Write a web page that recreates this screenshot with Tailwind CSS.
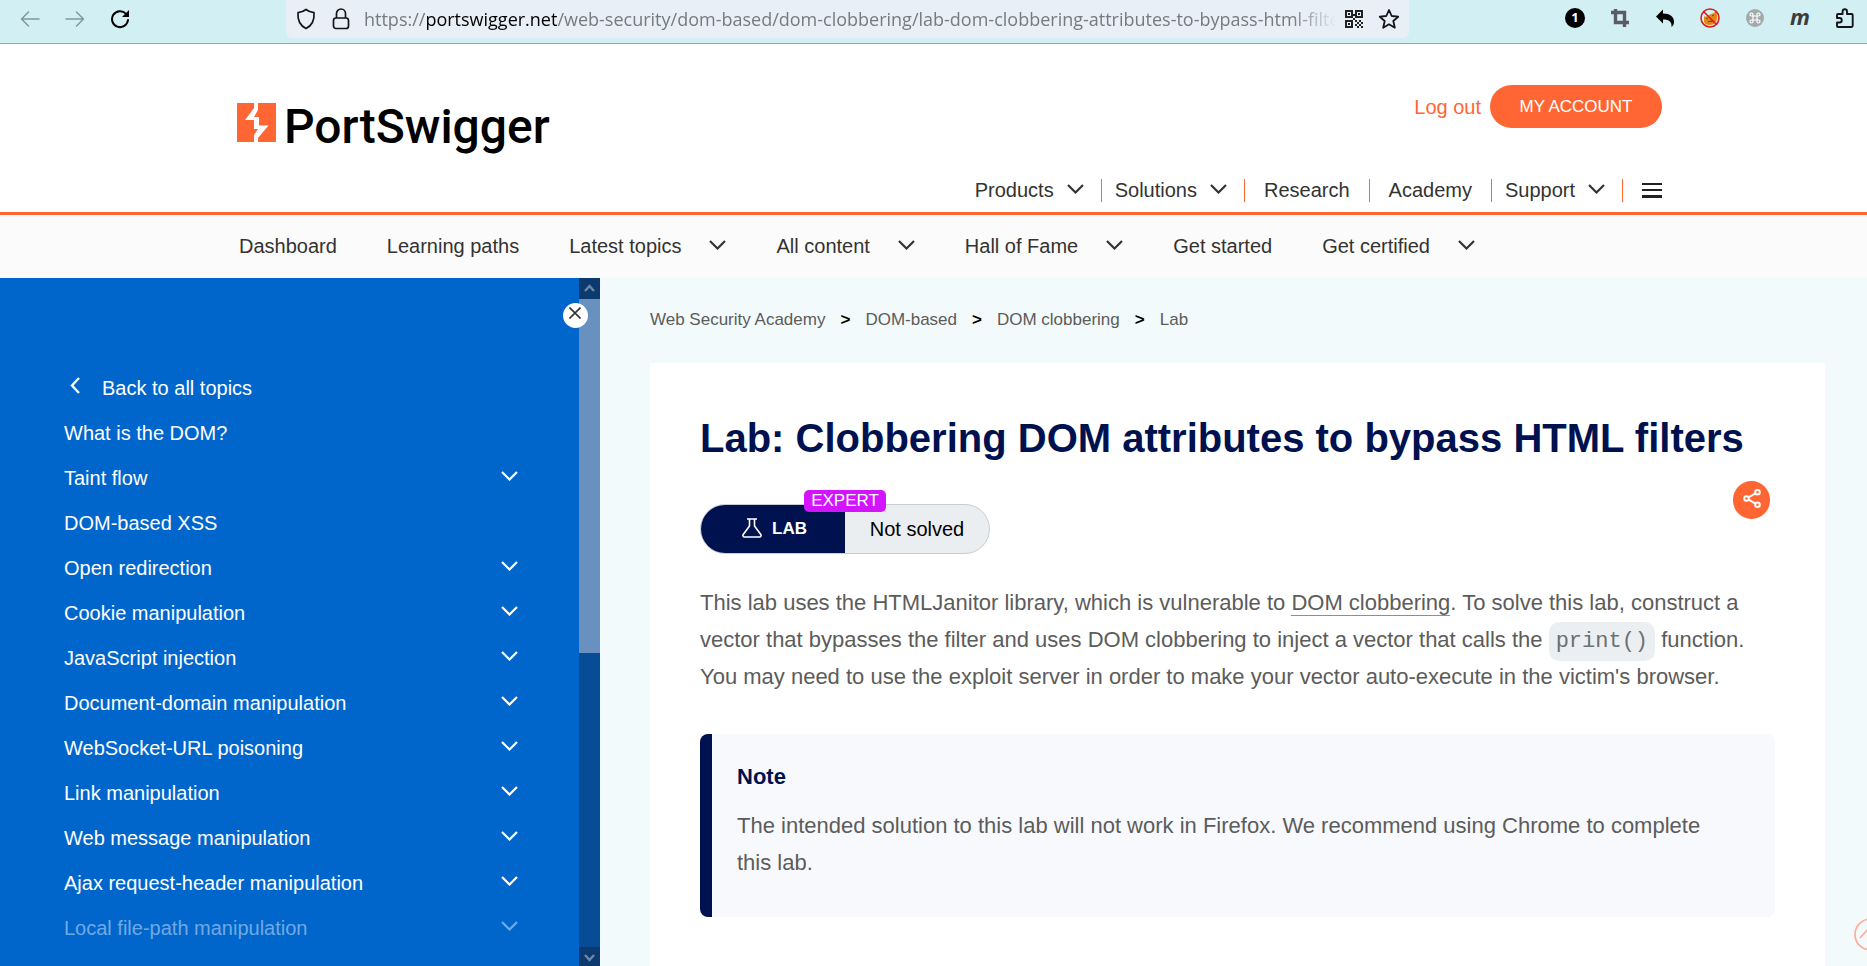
<!DOCTYPE html>
<html lang="en">
<head>
<meta charset="utf-8">
<meta name="viewport" content="width=device-width, initial-scale=1">
<title>Lab: Clobbering DOM attributes to bypass HTML filters</title>
<script src="https://cdn.jsdelivr.net/npm/@tailwindcss/browser@4"></script>
</head>
<body class="flex min-h-screen flex-col overflow-x-hidden bg-white font-['Liberation_Sans',Arial,sans-serif] text-[20px] text-[#333332]">
<svg class="hidden" aria-hidden="true">
  <symbol id="down" viewBox="0 0 17 10"><path d="M1 1l7.500 7.500L16 1" fill="none" stroke="currentColor" stroke-width="2.200"/></symbol>
</svg>

<!-- Browser toolbar -->
<div class="flex h-11 shrink-0 items-start border-b border-[#8fa9ad] bg-[#d2eff3] text-black">
  <div class="flex w-[286px] shrink-0 items-center gap-[25px] pt-[9px] pl-[20px]">
    <button aria-label="Back" class="text-[#85989b]"><svg class="h-5 w-5" viewBox="0 0 20 20" fill="none" stroke="currentColor" stroke-width="1.500" stroke-linecap="round" stroke-linejoin="round"><path d="M19 10H1.500M8.500 3L1.500 10l7 7"/></svg></button>
    <button aria-label="Forward" class="text-[#85989b]"><svg class="h-5 w-5" viewBox="0 0 20 20" fill="none" stroke="currentColor" stroke-width="1.500" stroke-linecap="round" stroke-linejoin="round"><path d="M1 10h17.500M11.500 3l7 7-7 7"/></svg></button>
    <button aria-label="Reload"><svg class="h-5 w-5" viewBox="0 0 20 20"><path d="M16 4.800A8 8 0 1 0 18 11" fill="none" stroke="currentColor" stroke-width="2" stroke-linecap="round"/><path d="M19 1v7h-7z" fill="currentColor"/></svg></button>
  </div>
  <div class="flex h-[38px] w-[1123px] shrink items-center rounded-b-md bg-[#e8eff6] pr-[9px] pb-px pl-[10px]">
    <button aria-label="Tracking protection"><svg class="h-[22px] w-5" viewBox="0 0 20 22" fill="none" stroke="#15141a" stroke-width="1.700" stroke-linejoin="round"><path d="M10 1.500c2.500 2 5 2.800 8 3.200.5 6.500-1.500 12.500-8 15.800C3.500 17.200 1.500 11.200 2 4.700c3-.4 5.500-1.200 8-3.200z"/></svg></button>
    <button aria-label="Site security" class="ml-[16px]"><svg class="h-[22px] w-[18px]" viewBox="0 0 18 22" fill="none" stroke="#15141a" stroke-width="1.700"><rect x="1.500" y="10" width="15" height="10.500" rx="2.500"/><path d="M4.500 10V5.500a4.500 4.500 0 0 1 9 0V10"/></svg></button>
    <div role="textbox" aria-label="Address" contenteditable="true" spellcheck="false" class="ml-[14px] min-w-0 flex-1 overflow-hidden font-['Open_Sans','Noto_Sans',sans-serif] text-[18px] leading-[30px] whitespace-nowrap text-[#757b80] outline-none [mask-image:linear-gradient(to_left,transparent,black_44px)]">https://<span class="text-black">portswigger.net</span>/web-security/dom-based/dom-clobbering/lab-dom-clobbering-attributes-to-bypass-html-filters</div>
    <button aria-label="QR code" class="ml-[8px]"><svg class="h-5 w-5" viewBox="0 0 20 20" fill="#222" shape-rendering="crispEdges"><path fill-rule="evenodd" d="M1 1h8v8H1zM3 3v4h4V3zM11 1h8v8h-8zM13 3v4h4V3zM1 11h8v8H1zM3 13v4h4v-4z"/><path d="M4 4h2v2H4zM14 4h2v2h-2zM4 14h2v2H4zM9 5h2v2H9zM11 11h2v2h-2zM15 11h2v2h-2zM13 13h2v2h-2zM17 13h2v2h-2zM11 15h2v2h-2zM15 15h2v2h-2zM13 17h2v2h-2zM17 17h2v2h-2zM9 9h2v2H9z"/></svg></button>
    <button aria-label="Bookmark" class="ml-[14px]"><svg class="h-[22px] w-[22px]" viewBox="0 0 22 22" fill="none" stroke="#15141a" stroke-width="1.800" stroke-linejoin="round"><path d="M11 2l2.700 6 6.500.7-4.900 4.300 1.500 6.700L11 16.300l-5.800 3.400 1.500-6.700L1.800 8.700l6.500-.7z"/></svg></button>
  </div>
  <div class="ml-auto flex items-center gap-[25px] pt-[8px] pr-3">
    <button aria-label="One" class="flex h-5 w-5 items-center justify-center rounded-full bg-black font-['Open_Sans',sans-serif] text-[13px] font-bold text-white">1</button>
    <button aria-label="Crop"><svg class="h-5 w-5" viewBox="0 0 20 20" fill="none" stroke="#5b5b66" stroke-width="3.400"><path d="M5.500 1v13.500H19M1 4.500h13.500V19"/></svg></button>
    <button aria-label="Undo"><svg class="h-5 w-5" viewBox="0 0 20 20"><path d="M8 1.500v4c7 0 11 3 11 8.500 0 2-1 4-2.500 5 .5-5-2-7.500-8.500-7.500v4L1 8.500z"/></svg></button>
    <button aria-label="Blocker"><svg class="h-5 w-5" viewBox="0 0 20 20"><path d="M4 8c1 1 2 1 3.500 0C10 6 13 6 16 3.500c1 3 1.500 6 .5 9-1 3-4 4.500-7 4.500s-5-1-5.500-3.500z" fill="#e8860c"/><path d="M6 10l2 1M12 8l2-1M8 14c2-1 3-1 5-.5" stroke="#7a3c05" stroke-width="1"/><circle cx="10" cy="10" r="9" fill="none" stroke="#d81e1e" stroke-width="1.600"/><path d="M3.500 3.500l13 13" stroke="#d81e1e" stroke-width="1.600"/></svg></button>
    <button aria-label="Command"><svg class="h-5 w-5" viewBox="0 0 20 20" fill="none"><circle cx="10" cy="10" r="9" fill="#a2aaac"/><path d="M8 8h4v4H8zM8 8H6.500A1.500 1.500 0 1 1 8 6.500zM12 8V6.500A1.500 1.500 0 1 1 13.500 8zM12 12h1.500A1.500 1.500 0 1 1 12 13.500zM8 12v1.500A1.500 1.500 0 1 1 6.500 12z" stroke="#fff" stroke-width="1.200"/></svg></button>
    <button aria-label="M extension" class="flex h-5 w-5 items-center justify-center pb-1 font-['Open_Sans',sans-serif] text-[22px] font-bold text-[#3c3c3c] italic">m</button>
    <button aria-label="Extensions"><svg class="h-5 w-5" viewBox="0 0 20 20" fill="none" stroke="#15141a" stroke-width="1.900" stroke-linejoin="round"><path d="M3 19h13.500a1.200 1.200 0 0 0 1.200-1.200V7a1 1 0 0 0-1-1H12V3.500a2.200 2.200 0 0 0-4.400 0V6H3a1 1 0 0 0-1 1v3h2.500a2 2 0 0 1 0 4.500H2V18a1 1 0 0 0 1 1z"/></svg></button>
  </div>
</div>

<!-- Site header -->
<header class="flex shrink-0 justify-between border-b-[3px] border-[#ff6633] pt-[41px] pr-[205px] pb-[10px] pl-[237px]">
  <a href="#" aria-label="PortSwigger home" class="mt-[12px] flex h-[60px] items-center gap-[8px] text-black">
    <svg class="mb-[9px] h-[39px] w-[39px]" viewBox="0 0 39 39"><path fill="#ff6633" d="M0 0h39v39H0z"/><path fill="#fff" d="M17 0h4v7l-4 7h5v8.500h9.500L21 35v4h-4v-7l4-6h-4v-9H8l9-12z"/></svg>
    <span class="font-['Roboto',sans-serif] text-[48px] leading-[60px] font-medium">PortSwigger</span>
  </a>
  <div class="flex flex-col items-end gap-[51px]">
    <div class="flex items-center gap-[9px]">
      <a href="#" class="text-[#ff6633]">Log out</a>
      <a href="#" class="flex h-[43px] w-[172px] items-center justify-center rounded-full bg-[#ff6633] text-[17px] text-white">MY ACCOUNT</a>
    </div>
    <nav aria-label="Site" class="flex h-[23px] items-center leading-[23px]">
      <button class="flex items-center gap-[13px] border-r border-[#ff6633] pr-[17px] pl-[13px]">Products <svg class="mb-1 h-[10px] w-[17px]"><use href="#down"/></svg></button>
      <button class="flex items-center gap-[13px] border-r border-[#ff6633] pr-[17px] pl-[13px]">Solutions <svg class="mb-1 h-[10px] w-[17px]"><use href="#down"/></svg></button>
      <a href="#" class="border-r border-[#ff6633] px-[19px]">Research</a>
      <a href="#" class="border-r border-[#ff6633] px-[19px]">Academy</a>
      <button class="flex items-center gap-[13px] border-r border-[#ff6633] pr-[17px] pl-[13px]">Support <svg class="mb-1 h-[10px] w-[17px]"><use href="#down"/></svg></button>
      <button aria-label="Menu" class="pl-[19px]"><svg class="h-[15px] w-5" viewBox="0 0 20 15" fill="#222"><path d="M0 0h20v2H0zM0 6h20v2H0zM0 12h20v3H0z"/></svg></button>
    </nav>
  </div>
</header>

<nav aria-label="Academy" class="flex h-[63px] shrink-0 items-center gap-[50px] bg-[#fbfbfb] pb-[2px] pl-[239px]">
  <a href="#">Dashboard</a>
  <a href="#">Learning paths</a>
  <button class="flex items-center gap-[28px]">Latest topics <svg class="mb-[2px] h-[10px] w-[17px]"><use href="#down"/></svg></button>
  <button class="flex items-center gap-[28px]">All content <svg class="mb-[2px] h-[10px] w-[17px]"><use href="#down"/></svg></button>
  <button class="flex items-center gap-[28px]">Hall of Fame <svg class="mb-[2px] h-[10px] w-[17px]"><use href="#down"/></svg></button>
  <a href="#">Get started</a>
  <button class="flex items-center gap-[28px]">Get certified <svg class="mb-[2px] h-[10px] w-[17px]"><use href="#down"/></svg></button>
</nav>

<div class="flex flex-1">
  <!-- Topic sidebar -->
  <aside class="relative flex w-[600px] shrink-0 bg-[#0066cc] text-white">
    <ul class="flex-1 pt-[88px] pr-[61px] pl-[64px] leading-[45px]">
      <li><a href="#" class="flex items-center gap-[22px] pl-[6px]"><svg class="mb-1.5 h-[17px] w-[10px]" viewBox="0 0 10 17"><path d="M9 1L2 8.500 9 16" fill="none" stroke="currentColor" stroke-width="2.400"/></svg>Back to all topics</a></li>
      <li><a href="#">What is the DOM?</a></li>
      <li><button class="flex w-full items-center justify-between">Taint flow <svg class="mb-1.5 h-[10px] w-[17px]"><use href="#down"/></svg></button></li>
      <li><a href="#">DOM-based XSS</a></li>
      <li><button class="flex w-full items-center justify-between">Open redirection <svg class="mb-1.5 h-[10px] w-[17px]"><use href="#down"/></svg></button></li>
      <li><button class="flex w-full items-center justify-between">Cookie manipulation <svg class="mb-1.5 h-[10px] w-[17px]"><use href="#down"/></svg></button></li>
      <li><button class="flex w-full items-center justify-between">JavaScript injection <svg class="mb-1.5 h-[10px] w-[17px]"><use href="#down"/></svg></button></li>
      <li><button class="flex w-full items-center justify-between">Document-domain manipulation <svg class="mb-1.5 h-[10px] w-[17px]"><use href="#down"/></svg></button></li>
      <li><button class="flex w-full items-center justify-between">WebSocket-URL poisoning <svg class="mb-1.5 h-[10px] w-[17px]"><use href="#down"/></svg></button></li>
      <li><button class="flex w-full items-center justify-between">Link manipulation <svg class="mb-1.5 h-[10px] w-[17px]"><use href="#down"/></svg></button></li>
      <li><button class="flex w-full items-center justify-between">Web message manipulation <svg class="mb-1.5 h-[10px] w-[17px]"><use href="#down"/></svg></button></li>
      <li><button class="flex w-full items-center justify-between">Ajax request-header manipulation <svg class="mb-1.5 h-[10px] w-[17px]"><use href="#down"/></svg></button></li>
      <li><button class="flex w-full items-center justify-between text-white/45">Local file-path manipulation <svg class="mb-1.5 h-[10px] w-[17px]"><use href="#down"/></svg></button></li>
    </ul>
    <div class="flex w-[21px] flex-col bg-[#064c96]">
      <div class="flex h-[21px] items-center justify-center bg-[#0c3a6e] pb-[2px]"><svg class="h-2 w-[11px]" viewBox="0 0 11 8"><path d="M1 7l4.500-5L10 7" fill="none" stroke="#6c88a9" stroke-width="2.400"/></svg></div>
      <div class="h-[354px] bg-[#6891c0]"></div>
      <div class="mt-auto flex h-[19px] items-center justify-center bg-[#0c3a6e] pt-[2px]"><svg class="h-2 w-[11px]" viewBox="0 0 11 8"><path d="M1 1l4.500 5L10 1" fill="none" stroke="#6c88a9" stroke-width="2.400"/></svg></div>
    </div>
    <button aria-label="Close topics" class="absolute top-[25px] right-[12px] flex h-[25px] w-[25px] items-center justify-center rounded-full bg-white pr-px pb-[5px]"><svg class="h-3 w-3" viewBox="0 0 12 12"><path d="M.5.500l11 11M11.500.500l-11 11" stroke="#333332" stroke-width="1.600"/></svg></button>
  </aside>

  <main class="min-w-0 flex-1 bg-[#f2fafc] pt-8 pr-[42px] pl-[50px]">
    <nav aria-label="Breadcrumb" class="mb-[33px] flex gap-[15px] text-[17px] leading-[20px] text-[#5c5c5b]">
      <a href="#">Web Security Academy</a><b class="text-black">&gt;</b>
      <a href="#">DOM-based</a><b class="text-black">&gt;</b>
      <a href="#">DOM clobbering</a><b class="text-black">&gt;</b>
      <span>Lab</span>
    </nav>
    <article class="min-h-[603px] bg-white px-[50px] pt-[51px]">
      <h1 class="text-[40px] leading-[48px] font-bold text-[#00114f]">Lab: Clobbering DOM attributes to bypass HTML filters</h1>
      <div class="mt-[19px] flex items-start justify-between">
        <div class="relative mt-[23px] mb-[30px] flex h-[50px] w-[290px] rounded-full border border-[#c9ced2] bg-[#ebeef1] text-black">
          <div class="flex w-[144px] items-center gap-[10px] rounded-l-full bg-[#00114f] pb-px pl-[41px] text-[17px] font-bold text-white"><svg class="mb-px h-5 w-[20px]" viewBox="0 0 20 20" fill="none" stroke="#fff" stroke-width="1.600" stroke-linejoin="round"><path d="M5 1h10M7.500 1v7L1.200 16.500c-.8 1.200 0 2.500 1.300 2.500h15c1.300 0 2.100-1.300 1.300-2.500L12.500 8V1"/></svg>LAB</div>
          <div class="flex flex-1 items-center justify-center">Not solved</div>
          <span class="absolute -top-[15px] left-[103px] h-[22px] w-[82px] rounded-[5px] bg-[#d314ff] text-center text-[17px] leading-[22px] text-white">EXPERT</span>
        </div>
        <button aria-label="Share" class="mr-[5px] flex h-[38px] w-[37px] items-center justify-center rounded-full bg-[#ff6633] pb-1"><svg class="h-[19px] w-[18px]" viewBox="0 0 18 19" fill="none" stroke="#fff" stroke-width="2"><circle cx="3.500" cy="9.500" r="2.300"/><circle cx="14.500" cy="3.300" r="2.300"/><circle cx="14.500" cy="15.700" r="2.300"/><path d="M5.500 8.300l7-4M5.500 10.700l7 4"/></svg></button>
      </div>
      <p class="text-[22px] leading-[37px] text-[#5c5c5b]">This lab uses the HTMLJanitor library, which is vulnerable to <a href="#" class="border-b border-[#ff6633]">DOM clobbering</a>. To solve this lab, construct a vector that bypasses the filter and uses DOM clobbering to inject a vector that calls the <code class="rounded-[10px] bg-[#ebeff2] px-[7px] py-[7px] font-['Liberation_Mono',monospace] text-[22px] leading-[20px] text-[#6d7074]">print()</code> function. You may need to use the exploit server in order to make your vector auto-execute in the victim's browser.</p>
      <section class="mt-[39px] rounded-lg border-l-[12px] border-[#00114f] bg-[#f8f9fd] pt-6 pr-[43px] pb-9 pl-[25px] text-[22px] leading-[37px]">
        <h2 class="mb-3 font-bold text-[#00114f]">Note</h2>
        <p class="text-[#5c5c5b]">The intended solution to this lab will not work in Firefox. We recommend using Chrome to complete this lab.</p>
      </section>
    </article>
  </main>
</div>

<button aria-label="Back to top" class="fixed -right-[20px] bottom-[15px] h-[33px] w-[33px]"><svg class="h-[33px] w-[33px]" viewBox="0 0 33 33" fill="none" stroke="#ffad94" stroke-width="1.700"><circle cx="16.500" cy="16.500" r="15.500"/><path d="M6 20L16.500 8.500 27 20"/></svg></button>
</body>
</html>
